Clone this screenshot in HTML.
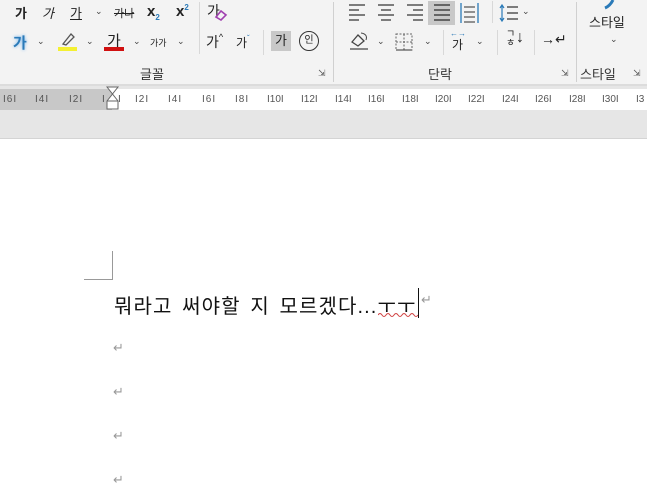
<!DOCTYPE html>
<html><head><meta charset="utf-8"><style>
*{margin:0;padding:0;box-sizing:border-box}
body{width:647px;height:502px;overflow:hidden;background:#fff;font-family:"Liberation Sans","Noto Sans CJK KR",sans-serif;position:relative;color:#222}
.a{position:absolute;white-space:nowrap}
.cv{font-size:9px;color:#444}
.r{font-size:10px;color:#555;letter-spacing:1px}
.ret{color:#999;font-size:13px}
</style></head><body>
<div class="a" style="left:0;top:0;width:647px;height:85px;background:#f3f3f3"></div>
<div class="a" style="left:0;top:84px;width:647px;height:2px;background:#dcdcdc"></div>
<div class="a" style="left:0;top:86px;width:647px;height:53px;background:#e6e6e6"></div>
<div class="a" style="left:0;top:138px;width:647px;height:1px;background:#d4d4d4"></div>
<div class="a" style="left:0;top:89px;width:112px;height:21px;background:#c8c8c8"></div>
<div class="a" style="left:112px;top:89px;width:535px;height:21px;background:#fff"></div>
<svg class="a" style="left:106px;top:86px" width="14" height="32"><path d="M1 1H12L6.5 8L12 15V23H1V15L6.5 8L1 1Z" fill="#fff" stroke="#666"/><path d="M1 15H12" stroke="#666"/></svg>
<div class="a r" style="left:3px;top:94px">I6I</div>
<div class="a r" style="left:35px;top:94px">I4I</div>
<div class="a r" style="left:69px;top:94px">I2I</div>
<div class="a r" style="left:102px;top:94px">I</div>
<div class="a r" style="left:118px;top:94px">I</div>
<div class="a r" style="left:135px;top:94px">I2I</div>
<div class="a r" style="left:168px;top:94px">I4I</div>
<div class="a r" style="left:202px;top:94px">I6I</div>
<div class="a r" style="left:235px;top:94px">I8I</div>
<div class="a r" style="left:267px;top:94px;letter-spacing:0">I10I</div>
<div class="a r" style="left:301px;top:94px;letter-spacing:0">I12I</div>
<div class="a r" style="left:335px;top:94px;letter-spacing:0">I14I</div>
<div class="a r" style="left:368px;top:94px;letter-spacing:0">I16I</div>
<div class="a r" style="left:402px;top:94px;letter-spacing:0">I18I</div>
<div class="a r" style="left:435px;top:94px;letter-spacing:0">I20I</div>
<div class="a r" style="left:468px;top:94px;letter-spacing:0">I22I</div>
<div class="a r" style="left:502px;top:94px;letter-spacing:0">I24I</div>
<div class="a r" style="left:535px;top:94px;letter-spacing:0">I26I</div>
<div class="a r" style="left:569px;top:94px;letter-spacing:0">I28I</div>
<div class="a r" style="left:602px;top:94px;letter-spacing:0">I30I</div>
<div class="a r" style="left:636px;top:94px;letter-spacing:0">I3</div>
<div class="a" style="left:15px;top:3px;font-size:13px;font-weight:bold">가</div>
<div class="a" style="left:42px;top:3px;font-size:13px;font-style:italic">가</div>
<div class="a" style="left:70px;top:3px;font-size:13px;text-decoration:underline">가</div>
<div class="a cv" style="left:95px;top:6px">⌄</div>
<div class="a" style="left:114px;top:5px;font-size:11px;text-decoration:line-through">가나</div>
<div class="a" style="left:147px;top:3px;font-size:15px;font-weight:bold">x<sub style="font-size:8px;color:#2a7ab8">2</sub></div>
<div class="a" style="left:176px;top:3px;font-size:15px;font-weight:bold">x<sup style="font-size:8px;color:#2a7ab8">2</sup></div>
<div class="a" style="left:199px;top:2px;width:1px;height:52px;background:#d8d8d8"></div>
<div class="a" style="left:207px;top:1px;font-size:14px">가</div>
<svg class="a" style="left:214px;top:9px" width="14" height="12"><path d="M2 8L7 2L12 6L7 11Z" fill="none" stroke="#a040b0" stroke-width="1.6"/></svg>
<div class="a" style="left:13px;top:32px;font-size:15px;font-weight:bold;color:#2a7ab8;text-shadow:0 0 3px #6ab0ee">가</div>
<div class="a cv" style="left:37px;top:36px">⌄</div>
<svg class="a" style="left:57px;top:30px" width="22" height="22"><path d="M6 14L14 4L17 7L9 15Z" fill="none" stroke="#555" stroke-width="1.3"/><rect x="1" y="17" width="19" height="4" fill="#f4f032"/></svg>
<div class="a cv" style="left:86px;top:36px">⌄</div>
<div class="a" style="left:107px;top:30px;font-size:15px">가</div>
<div class="a" style="left:104px;top:47px;width:20px;height:4px;background:#d01010"></div>
<div class="a cv" style="left:133px;top:36px">⌄</div>
<div class="a" style="left:150px;top:36px;font-size:9px">가가</div>
<div class="a cv" style="left:177px;top:36px">⌄</div>
<div class="a" style="left:206px;top:32px;font-size:14px">가<span style="font-size:9px;vertical-align:top">^</span></div>
<div class="a" style="left:236px;top:34px;font-size:12px">가<span style="font-size:8px;vertical-align:top;color:#2a7ab8">ˇ</span></div>
<div class="a" style="left:263px;top:30px;width:1px;height:25px;background:#d8d8d8"></div>
<div class="a" style="left:271px;top:31px;width:20px;height:20px;background:#c8c8c8;font-size:13px;text-align:center;line-height:20px">가</div>
<div class="a" style="left:299px;top:31px;width:20px;height:20px;border:1.3px solid #333;border-radius:50%;font-size:10px;text-align:center;line-height:17px">인</div>
<div class="a" style="left:140px;top:64px;font-size:13px;color:#333">글꼴</div>
<div class="a" style="left:318px;top:68px;font-size:9px;color:#555">⇲</div>
<div class="a" style="left:333px;top:2px;width:1px;height:80px;background:#d0d0d0"></div>
<svg class="a" style="left:345px;top:1px" width="145" height="24">
<g stroke="#555" stroke-width="1.4">
<path d="M4 4H20M4 9H14M4 14H20M4 19H14"/>
<path d="M33 4H49M36 9H46M33 14H49M36 19H46"/>
<path d="M62 4H78M68 9H78M62 14H78M68 19H78"/>
</g>
<rect x="83" y="0" width="27" height="24" fill="#c8c8c8"/>
<path d="M89 4H105M89 9H105M89 14H105M89 19H105" stroke="#444" stroke-width="1.6"/>
<g stroke="#2a7ab8" stroke-width="1.3" fill="none"><path d="M116 2V22M133 2V22"/><path d="M119 6H130M119 11H130M119 16H130M119 21H130" stroke="#555"/></g>
</svg>
<div class="a" style="left:492px;top:1px;width:1px;height:22px;background:#d8d8d8"></div>
<svg class="a" style="left:498px;top:3px" width="22" height="20"><path d="M4 2V18M2 5L4 2L6 5M2 15L4 18L6 15" stroke="#2a7ab8" fill="none" stroke-width="1.2"/><path d="M9 4H20M9 10H20M9 16H20" stroke="#555" stroke-width="1.4"/></svg>
<div class="a cv" style="left:522px;top:6px">⌄</div>
<svg class="a" style="left:348px;top:30px" width="24" height="22"><path d="M4 12L10 5L16 11L10 16Z" fill="none" stroke="#444" stroke-width="1.3"/><path d="M13 3Q20 4 18 10" fill="none" stroke="#444"/><path d="M2 19H20" stroke="#444" stroke-width="1.3"/></svg>
<div class="a cv" style="left:377px;top:36px">⌄</div>
<svg class="a" style="left:394px;top:32px" width="20" height="20"><rect x="2" y="2" width="16" height="16" fill="none" stroke="#666" stroke-dasharray="2 1.5"/><path d="M10 2V18M2 10H18" stroke="#666" stroke-dasharray="2 1.5"/><path d="M2 18H18" stroke="#333"/></svg>
<div class="a cv" style="left:424px;top:36px">⌄</div>
<div class="a" style="left:443px;top:30px;width:1px;height:25px;background:#d8d8d8"></div>
<div class="a" style="left:450px;top:29px;font-size:8px;color:#2a7ab8">←→</div>
<div class="a" style="left:452px;top:36px;font-size:12px">가</div>
<div class="a cv" style="left:476px;top:36px">⌄</div>
<div class="a" style="left:497px;top:30px;width:1px;height:25px;background:#d8d8d8"></div>
<div class="a" style="left:506px;top:30px;font-size:10px;line-height:9px">ㄱ<br>ㅎ</div>
<div class="a" style="left:516px;top:29px;font-size:16px">↓</div>
<div class="a" style="left:534px;top:30px;width:1px;height:25px;background:#d8d8d8"></div>
<div class="a" style="left:541px;top:31px;font-size:14px">→↵</div>
<div class="a" style="left:428px;top:64px;font-size:13px;color:#333">단락</div>
<div class="a" style="left:561px;top:68px;font-size:9px;color:#555">⇲</div>
<div class="a" style="left:576px;top:2px;width:1px;height:80px;background:#d0d0d0"></div>
<svg class="a" style="left:601px;top:0" width="16" height="10"><path d="M4 8Q9 6 12 0" stroke="#2a7ab8" stroke-width="3" fill="none"/></svg>
<div class="a" style="left:589px;top:12px;font-size:13px">스타일</div>
<div class="a cv" style="left:610px;top:34px">⌄</div>
<div class="a" style="left:580px;top:64px;font-size:13px;color:#333">스타일</div>
<div class="a" style="left:633px;top:68px;font-size:9px;color:#555">⇲</div>
<div class="a" style="left:84px;top:279px;width:29px;height:1px;background:#999"></div>
<div class="a" style="left:112px;top:251px;width:1px;height:29px;background:#999"></div>
<div class="a" style="left:114px;top:290px;font-size:20px;color:#111;letter-spacing:1.1px;word-spacing:3px">뭐라고 써야할 지 모르겠다...ㅜㅜ</div>
<svg class="a" style="left:378px;top:312px" width="42" height="6"><path d="M0 3Q2 0 4 3T8 3T12 3T16 3T20 3T24 3T28 3T32 3T36 3T40 3" stroke="#d04040" fill="none" stroke-width="1"/></svg>
<div class="a" style="left:418px;top:288px;width:1px;height:30px;background:#111"></div>
<div class="a ret" style="left:421px;top:292px">↵</div>
<div class="a ret" style="left:113px;top:340px">↵</div>
<div class="a ret" style="left:113px;top:384px">↵</div>
<div class="a ret" style="left:113px;top:428px">↵</div>
<div class="a ret" style="left:113px;top:472px">↵</div>
</body></html>
